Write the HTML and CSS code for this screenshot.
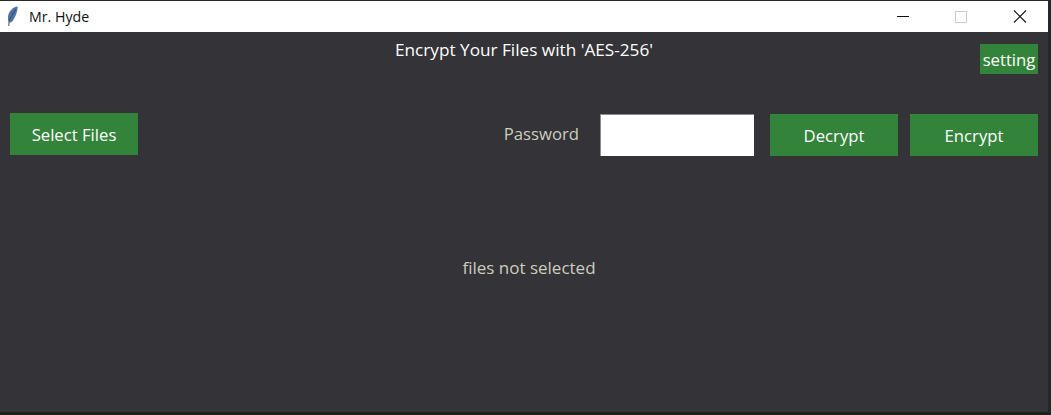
FILE: index.html
```html
<!DOCTYPE html>
<html lang="en">
<head>
    <meta charset="UTF-8">
    <meta name="viewport" content="width=device-width, initial-scale=1.0">
    <title>Mr. Hyde</title>
    <link rel="stylesheet" href="styles.css">
</head>
<body>
    <div class="window">
        <div class="titlebar">
            <svg class="app-icon" width="14" height="26" viewBox="0 0 14 26">
                <path d="M12.800 2.500 C7.500 3 3.500 7.500 3 13 C2.800 15.500 3.200 17.500 4 18.500 C5.500 18.800 7 18 8 16.500 C10.500 13 12.300 8 12.800 2.500 Z" fill="#4f74a3"/>
                <path d="M11 5 C8.500 9 5.500 13 4.200 17" fill="none" stroke="#35506f" stroke-width="1"/>
                <path d="M4.200 17 L3.700 22" fill="none" stroke="#6b6b6b" stroke-width="1.200"/>
            </svg>
            <span class="app-name">Mr. Hyde</span>
            <div class="controls">
                <svg class="control" width="58" height="31" viewBox="0 0 58 31"><path d="M22 15.500 H34" stroke="#111" stroke-width="1"/></svg>
                <svg class="control" width="58" height="31" viewBox="0 0 58 31"><rect x="22.500" y="10.500" width="11" height="11" fill="none" stroke="#ccc" stroke-width="1"/></svg>
                <svg class="control" width="57" height="31" viewBox="0 0 57 31"><path d="M23 9.500 L35 21.500 M35 9.500 L23 21.500" stroke="#111" stroke-width="1.100"/></svg>
            </div>
        </div>

        <div class="content">
            <div class="top-row">
                <div class="heading">Encrypt Your Files with 'AES-256'</div>
                <button class="btn setting-btn">setting</button>
            </div>

            <div class="action-row">
                <button class="btn action-btn select-btn">Select Files</button>
                <div class="password-group">
                    <label class="password-label" for="password">Password</label>
                    <input class="password-input" id="password" type="password">
                    <button class="btn action-btn">Decrypt</button>
                    <button class="btn action-btn">Encrypt</button>
                </div>
            </div>

            <div class="status">files not selected</div>
        </div>
    </div>
</body>
</html>
```

FILE: styles.css
```css
html, body {
    margin: 0;
    padding: 0;
}

body {
    width: 1051px;
    height: 415px;
    overflow: hidden;
    font-family: "Open Sans", "Noto Sans", sans-serif;
    background-color: #333338;
}

.window {
    display: flex;
    flex-direction: column;
    height: 415px;
    box-sizing: border-box;
    border-top: 1px solid #2b2b2b;
    border-right: 3px solid #262626;
    border-bottom: 3px solid #1f1f1c;
}

/* Title bar */
.titlebar {
    display: flex;
    align-items: center;
    height: 31px;
    flex-shrink: 0;
    background: #fff;
    color: #111;
}

.app-icon {
    margin-left: 5px;
    margin-top: 1px;
}

.app-name {
    margin-left: 10px;
    font-size: 14.200px;
}

.controls {
    display: flex;
    margin-left: auto;
}

.control {
    display: block;
}

/* Main area */
.content {
    flex: 1;
    display: flex;
    flex-direction: column;
    padding: 0 10px;
}

.btn {
    border: none;
    padding: 0;
    font-family: inherit;
    background: #34833a;
    color: #fff;
}

.top-row {
    display: grid;
    grid-template-columns: 1fr auto 1fr;
    margin-top: 6px;
}

.heading {
    grid-column: 2;
    font-size: 17.200px;
    line-height: 24px;
    color: #fff;
}

.setting-btn {
    grid-column: 3;
    justify-self: end;
    width: 58px;
    height: 30px;
    margin-top: 6px;
    font-size: 16.700px;
}

.action-row {
    display: flex;
    align-items: flex-start;
    justify-content: space-between;
    margin-top: 39px;
}

.action-btn {
    width: 128px;
    height: 42px;
    font-size: 16.700px;
}

.password-group {
    display: flex;
    align-items: center;
    margin-top: 1px;
}

.password-label {
    margin-right: 21px;
    margin-bottom: 3px;
    font-size: 16.700px;
    color: #cdcdbd;
}

.password-input {
    box-sizing: border-box;
    width: 154px;
    height: 42px;
    margin-right: 16px;
    padding: 0;
    border: none;
    border-top: 1px solid #8c8c8c;
    border-left: 1px solid #8c8c8c;
    background: #fff;
}

.action-btn + .action-btn {
    margin-left: 12px;
}

.status {
    margin-top: 100px;
    padding-left: 10px;
    text-align: center;
    font-size: 17px;
    line-height: 24px;
    color: #cdcdbd;
}
```
